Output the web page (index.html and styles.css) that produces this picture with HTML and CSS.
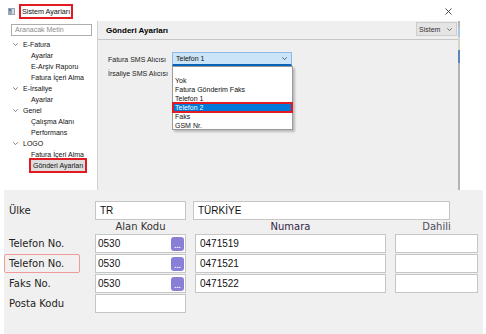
FILE: index.html
```html
<!DOCTYPE html>
<html lang="tr">
<head>
  <meta charset="UTF-8" />
  <meta name="viewport" content="width=device-width, initial-scale=1.0"/>
  <title>Sistem Ayarları</title>
  <link rel="stylesheet" href="styles.css">
</head>
<body>
  <!-- Settings window -->
  <div class="window">
    <div class="titlebar">
      <svg class="app-icon" width="7" height="7" viewBox="0 0 7 7">
        <rect x="0" y="0" width="7" height="7" fill="#9aa5b1"/>
        <rect x="1" y="1" width="2" height="2" fill="#4d7db2"/>
        <rect x="4" y="1" width="2" height="5" fill="#d3dae2"/>
      </svg>
      <span class="title">Sistem Ayarları</span>
      <svg class="close" width="7" height="7" viewBox="0 0 7 7">
        <path d="M0.5 0.5 L6.5 6.5 M6.5 0.5 L0.5 6.5" stroke="#333" stroke-width="0.9" fill="none"/>
      </svg>
    </div>

    <div class="content">
      <aside class="sidebar">
        <div class="search">Aranacak Metin</div>
        <ul class="tree">
          <li class="group"><svg class="chev" width="5" height="3" viewBox="0 0 5 3"><path d="M0.3 0.3 L2.5 2.6 L4.7 0.3" stroke="#666" stroke-width="0.8" fill="none"/></svg>E-Fatura</li>
          <li class="leaf">Ayarlar</li>
          <li class="leaf">E-Arşiv Raporu</li>
          <li class="leaf">Fatura İçeri Alma</li>
          <li class="group"><svg class="chev" width="5" height="3" viewBox="0 0 5 3"><path d="M0.3 0.3 L2.5 2.6 L4.7 0.3" stroke="#666" stroke-width="0.8" fill="none"/></svg>E-İrsaliye</li>
          <li class="leaf">Ayarlar</li>
          <li class="group"><svg class="chev" width="5" height="3" viewBox="0 0 5 3"><path d="M0.3 0.3 L2.5 2.6 L4.7 0.3" stroke="#666" stroke-width="0.8" fill="none"/></svg>Genel</li>
          <li class="leaf">Çalışma Alanı</li>
          <li class="leaf">Performans</li>
          <li class="group"><svg class="chev" width="5" height="3" viewBox="0 0 5 3"><path d="M0.3 0.3 L2.5 2.6 L4.7 0.3" stroke="#666" stroke-width="0.8" fill="none"/></svg>LOGO</li>
          <li class="leaf">Fatura İçeri Alma</li>
          <li class="leaf"><span class="selected">Gönderi Ayarları</span></li>
        </ul>
      </aside>

      <section class="panel">
        <div class="panel-head">
          <b>Gönderi Ayarları</b>
          <div class="mini-select">
            <span>Sistem</span>
            <svg width="5" height="3" viewBox="0 0 5 3"><path d="M0.3 0.3 L2.5 2.6 L4.7 0.3" stroke="#555" stroke-width="0.8" fill="none"/></svg>
          </div>
        </div>
        <div class="panel-body">
          <div class="field">
            <label>Fatura SMS Alıcısı</label>
            <div class="combo">
              <span>Telefon 1</span>
              <svg width="5" height="3" viewBox="0 0 5 3"><path d="M0.3 0.3 L2.5 2.6 L4.7 0.3" stroke="#444" stroke-width="0.8" fill="none"/></svg>
            </div>
          </div>
          <div class="field">
            <label>İrsaliye SMS Alıcısı</label>
          </div>
        </div>

        <!-- open list of the combo -->
        <ul class="dropdown">
          <li></li>
          <li>Yok</li>
          <li>Fatura Gönderim Faks</li>
          <li>Telefon 1</li>
          <li class="active">Telefon 2</li>
          <li>Faks</li>
          <li>GSM Nr.</li>
        </ul>
      </section>
      <div class="edge"></div>
    </div>
  </div>

  <!-- Address form -->
  <div class="address">
    <div class="lbl">Ülke</div>
    <div class="box">TR</div>
    <div class="box wide">TÜRKİYE</div>

    <div></div>
    <div class="col-head">Alan Kodu</div>
    <div class="col-head numara">Numara</div>
    <div class="col-head dahili">Dahili</div>

    <div class="lbl">Telefon No.</div>
    <div class="box code"><span>0530</span><span class="dots">...</span></div>
    <div class="box">0471519</div>
    <div class="box"></div>

    <div class="lbl marked">Telefon No.</div>
    <div class="box code"><span>0530</span><span class="dots">...</span></div>
    <div class="box">0471521</div>
    <div class="box"></div>

    <div class="lbl">Faks No.</div>
    <div class="box code"><span>0530</span><span class="dots">...</span></div>
    <div class="box">0471522</div>
    <div class="box"></div>

    <div class="lbl">Posta Kodu</div>
    <div class="box"></div>
  </div>
</body>
</html>
```

FILE: styles.css
```css
* { box-sizing: border-box; }

body {
  margin: 0;
  width: 486px;
  height: 334px;
  overflow: hidden;
  background: #fff;
  color: #1f1f1f;
  font-family: "Liberation Sans", Arial, sans-serif;
  font-size: 7px;
}

ul {
  list-style: none;
  margin: 0;
  padding: 0;
}

/* Settings window */
.window {
  height: 190px;
  display: flex;
  flex-direction: column;
}

.titlebar {
  height: 21px;
  display: flex;
  align-items: center;
  padding: 2px 0 0 8px;
}

.app-icon {
  display: block;
}

.title {
  margin-left: 4px;
  height: 15px;
  line-height: 11px;
  padding: 0 1px;
  border: 2px solid #e21b23;
  white-space: nowrap;
  font-size: 7.2px;
  color: #111;
}

.close {
  display: block;
  margin-left: auto;
  margin-right: 34px;
  margin-top: -1px;
}

.content {
  flex: 1;
  display: flex;
}

.sidebar {
  width: 97px;
  padding: 3px 0 0 11px;
}

.search {
  width: 81px;
  height: 12px;
  border: 1px solid #adadad;
  padding-left: 3px;
  line-height: 10px;
  color: #8c8c8c;
}

.tree {
  margin-top: 3px;
  line-height: 11px;
  color: #111;
}

.tree .group {
  display: flex;
  align-items: center;
}

.tree .chev {
  display: block;
  margin: 0 5px 0 2px;
}

.tree .leaf {
  padding-left: 20px;
}

.tree .selected {
  display: inline-block;
  width: 54px;
  padding-left: 2px;
  background: #dedede;
  outline: 2px solid #e21b23;
}

.panel {
  position: relative;
  width: 361px;
  background: #efefef;
  border-left: 1px solid #d2d2d2;
}

.panel-head {
  height: 19px;
  display: flex;
  align-items: center;
  justify-content: space-between;
  padding-left: 8px;
  border-bottom: 1px solid #c6c6c6;
}

.panel-head b {
  font-size: 8px;
  color: #000;
}

.mini-select {
  width: 41px;
  height: 14px;
  margin-right: 1px;
  margin-top: -2px;
  display: flex;
  align-items: center;
  justify-content: space-between;
  padding: 0 4px 0 2px;
  background: #e4e4e4;
  border: 1px solid #cdcdcd;
  color: #333;
}

.mini-select svg,
.combo svg {
  display: block;
}

.panel-body {
  padding: 12px 0 0 10px;
}

.field {
  height: 14px;
  display: flex;
  align-items: center;
}

.field label {
  width: 64px;
  color: #222;
}

.combo {
  width: 120px;
  height: 14px;
  display: flex;
  align-items: center;
  justify-content: space-between;
  padding: 0 4px 0 3px;
  background: #cce4f7;
  border: 1px solid #8cbbe8;
  border-bottom: 2px solid #0a64b8;
  color: #111;
}

.dropdown {
  position: absolute;
  top: 45px;
  left: 74px;
  width: 121px;
  height: 64px;
  background: #fff;
  border: 1px solid #9a9a9a;
  box-shadow: 2px 2px 2px rgba(0, 0, 0, 0.22);
  line-height: 9px;
  color: #111;
}

.dropdown li {
  height: 9px;
  padding-left: 2px;
}

.dropdown .active {
  background: #0078d7;
  color: #fff;
  outline: 2px solid #e21b23;
  outline-offset: -1px;
}

.edge {
  width: 2px;
  background: linear-gradient(to bottom,
    #b4b4b4 0 6px, #a9c6e2 6px 16px, #d9d5c6 16px 29px,
    #5a86b8 29px 42px, #b4b4b4 42px);
}

/* Address form */
.address {
  height: 144px;
  margin: 0 3px 0 4px;
  padding: 11px 0 0 4px;
  background: #f0f0f0;
  display: grid;
  grid-template-columns: 78px 91px 191px 83px;
  grid-template-rows: 19px 12px 19px 19px 19px 19px;
  column-gap: 9px;
  row-gap: 1px;
  align-content: start;
  font-size: 10px;
}

.lbl {
  display: flex;
  align-items: center;
  padding-left: 1px;
  font-family: "DejaVu Sans", Verdana, sans-serif;
  color: #222;
  white-space: nowrap;
}

.lbl.marked {
  margin-left: -4px;
  width: 76px;
  padding-left: 4px;
  border: 1px solid #f09a9a;
  border-radius: 2px;
}

.box {
  display: flex;
  align-items: center;
  justify-content: space-between;
  padding: 0 1px 0 4px;
  background: #fff;
  border: 1px solid #c6c6c6;
  color: #111;
}

.box.wide {
  grid-column: 3 / 5;
  width: 257px;
  margin-left: -2px;
}

.box.code {
  padding-left: 2px;
}

.dots {
  width: 13px;
  height: 14px;
  border-radius: 3px;
  background: #8a7fd6;
  color: #fff;
  font-size: 8px;
  font-weight: bold;
  text-align: center;
  line-height: 17px;
  overflow: hidden;
}

.col-head {
  text-align: center;
  font-family: "DejaVu Sans", Verdana, sans-serif;
  line-height: 12px;
  color: #333;
}

.col-head.numara {
  color: #33264a;
}

.col-head.dahili {
  color: #4d4d5c;
}
```
